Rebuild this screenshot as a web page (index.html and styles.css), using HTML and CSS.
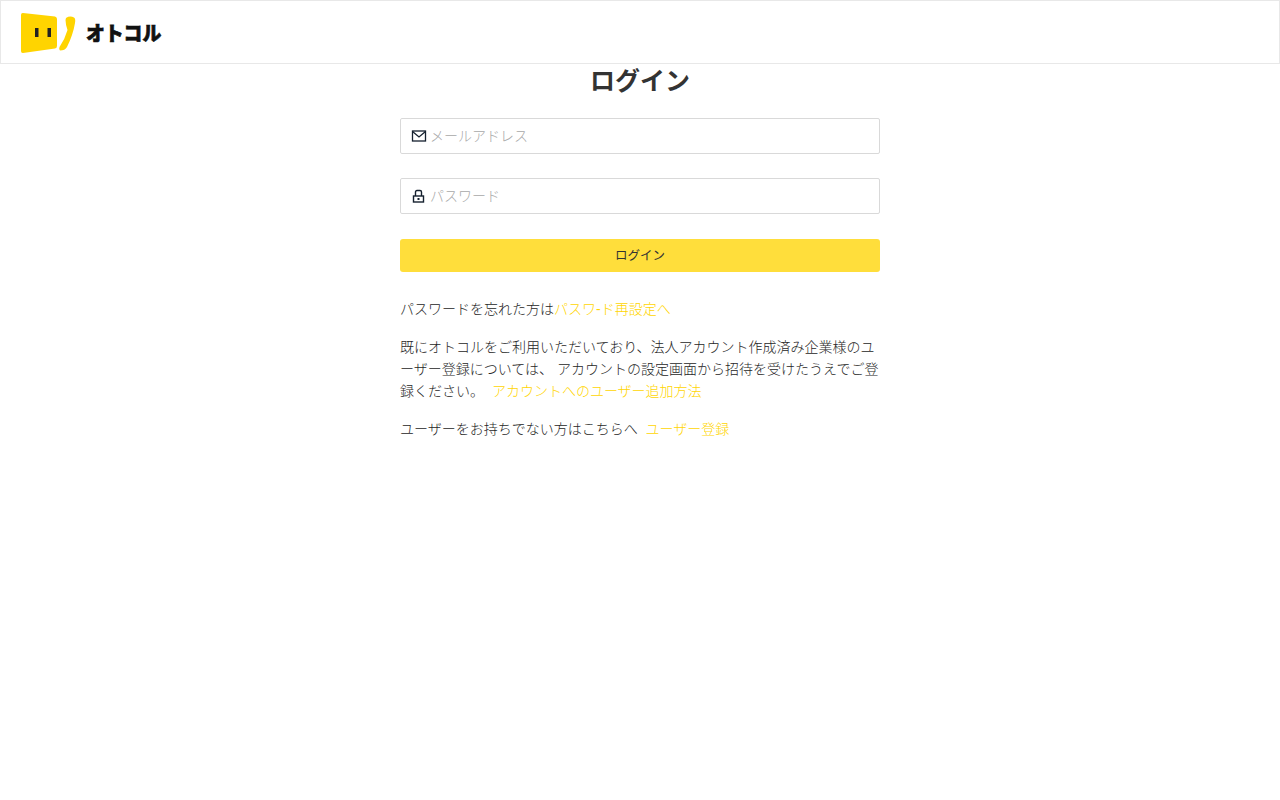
FILE: index.html
```html
<!DOCTYPE html>
<html lang="ja">
<head>
    <meta charset="UTF-8">
    <meta name="viewport" content="width=device-width, initial-scale=1.0">
    <title>ログイン</title>
    <link rel="stylesheet" href="styles.css">
</head>
<body>
    <header class="site-header">
        <a href="#" class="logo">
            <svg class="logo-mark" width="56" height="42" viewBox="0 0 56 42">
                <path d="M2 1 L34 4.500 Q36 5 36 7 V34 Q36 36 34 36.500 L2 41 Q0 41.200 0 39 V3 Q0 .8 2 1 Z" fill="#ffd400"/>
                <rect x="14" y="16" width="3.500" height="9" fill="#222"/>
                <rect x="26.500" y="16" width="3.500" height="9" fill="#222"/>
                <path d="M45 6 Q49 3.500 53 5.500 Q54.800 6.500 54 11 Q52 23 46 35 Q44 38.500 39 38.500 Q37.500 37.500 38.500 35 Q44 27 46.500 18 Q44.500 12 44.500 8 Z" fill="#ffd400"/>
            </svg>
            <span class="logo-text">オトコル</span>
        </a>
    </header>

    <main class="login-container">
        <h1>ログイン</h1>

        <div class="form-group">
            <svg class="field-icon" width="16" height="14" viewBox="0 0 16 14">
                <rect x="1.500" y="2" width="13" height="10" fill="none" stroke="#14202e" stroke-width="1.300"/>
                <path d="M1.500 2.500 L8 8 L14.500 2.500" fill="none" stroke="#14202e" stroke-width="1.300"/>
            </svg>
            <input type="text" id="email" placeholder="メールアドレス">
        </div>

        <div class="form-group">
            <svg class="field-icon" width="16" height="14" viewBox="0 0 16 14">
                <path d="M4.500 7 V3 Q4.500 1.500 6 1.500 H9 Q10.500 1.500 10.500 3 V7" fill="none" stroke="#14202e" stroke-width="1.400"/>
                <rect x="2.500" y="7" width="10" height="6" fill="none" stroke="#14202e" stroke-width="1.400"/>
                <rect x="6.500" y="9" width="2" height="2" fill="#14202e"/>
            </svg>
            <input type="password" id="password" placeholder="パスワード">
        </div>

        <button type="button" id="login-btn">ログイン</button>

        <p>パスワードを忘れた方は<a href="#">パスワ-ド再設定へ</a></p>
        <p>既にオトコルをご利用いただいており、法人アカウント作成済み企業様のユーザー登録については、 アカウントの設定画面から招待を受けたうえでご登録ください。 <a href="#" class="spaced">アカウントへのユーザー追加方法</a></p>
        <p>ユーザーをお持ちでない方はこちらへ <a href="#" class="spaced">ユーザー登録</a></p>
    </main>
</body>
</html>
```

FILE: styles.css
```css
body {
    font-family: "Liberation Sans", "Noto Sans CJK JP", sans-serif;
    background-color: white;
    color: #262626;
    margin: 0;
    padding: 0;
}

.site-header {
    box-sizing: border-box;
    height: 64px;
    border: 1px solid #e8e8e8;
    padding: 11px 20px;
}

.logo {
    display: flex;
    align-items: center;
    gap: 9px;
    text-decoration: none;
}

.logo-mark {
    flex: none;
}

.logo-text {
    font-family: "Noto Sans CJK JP", sans-serif;
    font-size: 20px;
    line-height: 42px;
    font-weight: 900;
    color: #111;
    -webkit-text-stroke: .7px #111;
    transform: scaleX(.94);
    transform-origin: left center;
}

.login-container {
    width: 480px;
    margin: 0 auto;
    font-size: 14px;
    font-weight: 300;
    line-height: 22px;
}

h1 {
    margin: 0 0 20px;
    height: 34px;
    line-height: 34px;
    font-size: 25px;
    font-weight: bold;
    text-align: center;
    color: #333;
}

.form-group {
    position: relative;
    margin-bottom: 24px;
}

.field-icon {
    position: absolute;
    left: 11px;
    top: 11px;
}

input {
    display: block;
    width: 100%;
    height: 36px;
    box-sizing: border-box;
    padding: 0 10px 0 29px;
    border: 1px solid #d9d9d9;
    border-radius: 2px;
    font-family: inherit;
    font-size: 14px;
    font-weight: 300;
    color: #333;
}

input::placeholder {
    color: #a8a8a8;
}

button {
    display: block;
    width: 100%;
    height: 33px;
    margin: 25px 0 26px;
    padding: 0 0 2px;
    border: none;
    border-radius: 3px;
    background-color: #ffde3b;
    color: #333;
    font-family: inherit;
    font-size: 12.500px;
    font-weight: 400;
}

p {
    margin: 0 0 16px;
}

a {
    color: #ffd500;
    text-decoration: none;
}

.spaced {
    margin-left: 4px;
}
```
